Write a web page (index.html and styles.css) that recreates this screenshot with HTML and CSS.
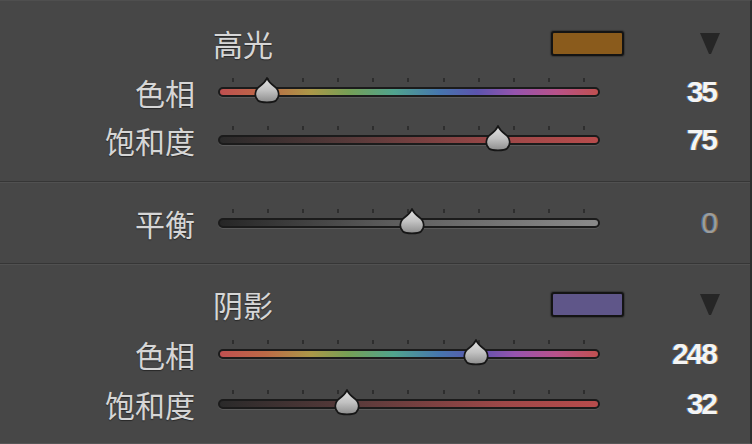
FILE: index.html
```html
<!DOCTYPE html>
<html lang="zh">
<head>
<meta charset="utf-8">
<title>分离色调</title>
<link rel="stylesheet" href="styles.css">
</head>
<body>
<div class="panel">
  <section class="group group-top">
    <div class="head">
      <span class="title">高光</span>
      <span class="swatch swatch-hl"></span>
      <svg class="caret" viewBox="0 0 22 23" width="22" height="23"><path d="M1 1 H21 L12 22 H10 Z" fill="#262626"/></svg>
    </div>
    <div class="row">
      <span class="label">色相</span>
      <div class="slider">
        <div class="ticks"><i></i><i></i><i></i><i></i><i></i><i></i><i></i><i></i><i></i><i></i><i></i></div>
        <div class="track track-hue"></div>
        <svg class="thumb" style="left:35px" viewBox="0 0 28 27" width="28" height="27"><use href="#drop"/></svg>
      </div>
      <span class="value">35</span>
    </div>
    <div class="row">
      <span class="label">饱和度</span>
      <div class="slider">
        <div class="ticks"><i></i><i></i><i></i><i></i><i></i><i></i><i></i><i></i><i></i><i></i><i></i></div>
        <div class="track track-sat"></div>
        <svg class="thumb" style="left:266px" viewBox="0 0 28 27" width="28" height="27"><use href="#drop"/></svg>
      </div>
      <span class="value">75</span>
    </div>
  </section>
  <div class="sep"></div>
  <section class="group group-mid">
    <div class="row">
      <span class="label">平衡</span>
      <div class="slider">
        <div class="ticks"><i></i><i></i><i></i><i></i><i></i><i></i><i></i><i></i><i></i><i></i><i></i></div>
        <div class="track track-bal"></div>
        <svg class="thumb" style="left:180px" viewBox="0 0 28 27" width="28" height="27"><use href="#drop"/></svg>
      </div>
      <span class="value value-dim">0</span>
    </div>
  </section>
  <div class="sep"></div>
  <section class="group group-bot">
    <div class="head">
      <span class="title">阴影</span>
      <span class="swatch swatch-sh"></span>
      <svg class="caret" viewBox="0 0 22 23" width="22" height="23"><path d="M1 1 H21 L12 22 H10 Z" fill="#262626"/></svg>
    </div>
    <div class="row">
      <span class="label">色相</span>
      <div class="slider">
        <div class="ticks"><i></i><i></i><i></i><i></i><i></i><i></i><i></i><i></i><i></i><i></i><i></i></div>
        <div class="track track-hue"></div>
        <svg class="thumb" style="left:244px" viewBox="0 0 28 27" width="28" height="27"><use href="#drop"/></svg>
      </div>
      <span class="value">248</span>
    </div>
    <div class="row">
      <span class="label">饱和度</span>
      <div class="slider">
        <div class="ticks"><i></i><i></i><i></i><i></i><i></i><i></i><i></i><i></i><i></i><i></i><i></i></div>
        <div class="track track-sat"></div>
        <svg class="thumb" style="left:115px" viewBox="0 0 28 27" width="28" height="27"><use href="#drop"/></svg>
      </div>
      <span class="value">32</span>
    </div>
  </section>
</div>
<svg class="defs" width="0" height="0">
  <defs>
    <linearGradient id="dropfill" x1="0" y1="0" x2="0" y2="1">
      <stop offset="0" stop-color="#e2e2e2"/>
      <stop offset="0.5" stop-color="#c2c2c2"/>
      <stop offset="1" stop-color="#8c8c8c"/>
    </linearGradient>
    <symbol id="drop" viewBox="0 0 28 27">
      <path d="M14 1.2 C15.5 4.5 18 7 21.5 9.5 C26.5 13 27 20 23 23.5 C20 26 8 26 5 23.5 C1 20 1.5 13 6.5 9.5 C10 7 12.5 4.5 14 1.2 Z" fill="url(#dropfill)" stroke="#161616" stroke-width="1.7"/>
    </symbol>
  </defs>
</svg>
</body>
</html>
```

FILE: styles.css
```css
html, body {
  margin: 0;
  padding: 0;
  background: #474747;
}

body {
  width: 752px;
  height: 444px;
  overflow: hidden;
  font-family: "Noto Sans CJK SC", "Noto Sans", sans-serif;
}

.panel {
  width: 750px;
  height: 442px;
  background: #474747;
  border-top: 1px solid #4f4f4f;
  border-right: 2px solid #2e2e2e;
  border-bottom: 1px solid #565656;
}

.defs {
  position: absolute;
  width: 0;
  height: 0;
}

.group-top {
  padding-top: 17px;
  height: 163px;
}

.group-mid {
  padding-top: 16px;
  height: 64px;
}

.group-bot {
  padding-top: 14px;
}

.sep {
  height: 1px;
  background: #363636;
  border-bottom: 1px solid #515151;
}

.head {
  display: flex;
  align-items: center;
  height: 50px;
  padding-left: 213px;
  padding-right: 29px;
}

.title {
  flex: 1;
  font-size: 30px;
  line-height: 1;
  color: #d6d6d6;
  text-shadow: 0 1px 1px rgba(0, 0, 0, 0.45);
}

.swatch {
  width: 69px;
  height: 21px;
  border: 2px solid #141414;
  border-radius: 3px;
  margin-right: 75px;
  box-shadow: 0 0 1px 1px rgba(0, 0, 0, 0.25);
}

.swatch-hl {
  background: #8a5b1c;
}

.swatch-sh {
  background: #5f5689;
}

.caret {
  display: block;
}

.row {
  display: flex;
  align-items: center;
  height: 48px;
}

.group-bot .row {
  height: 50px;
}

.label {
  width: 195px;
  text-align: right;
  font-size: 30px;
  line-height: 1;
  color: #d6d6d6;
  text-shadow: 0 1px 1px rgba(0, 0, 0, 0.45);
}

.slider {
  position: relative;
  margin-left: 23px;
  width: 382px;
  height: 100%;
  display: flex;
  flex-direction: column;
  justify-content: center;
  box-sizing: border-box;
  padding-bottom: 9px;
}

.ticks {
  display: flex;
  justify-content: space-between;
  padding: 0 15px 0 14px;
  height: 4px;
  margin-bottom: 5px;
}

.ticks i {
  display: block;
  width: 2px;
  height: 4px;
  background: #2e2e2e;
}

.track {
  height: 6px;
  border: 2px solid #1b1b1b;
  border-radius: 5px;
  box-shadow: 0 1px 0 #5a5a5a;
}

.track-hue {
  background: linear-gradient(to right,
    #c05050 0%, #bc6a46 12%, #ac9848 24%, #76a056 34%,
    #50a48e 46%, #4676ae 58%, #5c54ae 68%, #9654ae 78%,
    #b8528a 89%, #c05050 100%);
}

.track-sat {
  background: linear-gradient(to right, #2a2a2a 0%, #583a3a 35%, #9e4848 75%, #b84c4c 100%);
}

.track-bal {
  background: linear-gradient(to right, #262626 0%, #5c5c5c 45%, #8a8a8a 100%);
}

.thumb {
  position: absolute;
  top: calc(50% - 15px);
}

.value {
  width: 116px;
  text-align: right;
  font-family: "Liberation Sans", Arial, sans-serif;
  font-weight: bold;
  font-size: 30px;
  letter-spacing: -2px;
  line-height: 1;
  color: #f4f4f4;
  text-shadow: -1px 0 0 rgba(70, 140, 220, 0.8), 1px 0 0 rgba(220, 150, 60, 0.7);
}

.value-dim {
  color: #9c9c9c;
  font-weight: normal;
  text-shadow: -1px 0 0 rgba(70, 130, 200, 0.7), 1px 0 0 rgba(200, 140, 60, 0.6);
}
```
